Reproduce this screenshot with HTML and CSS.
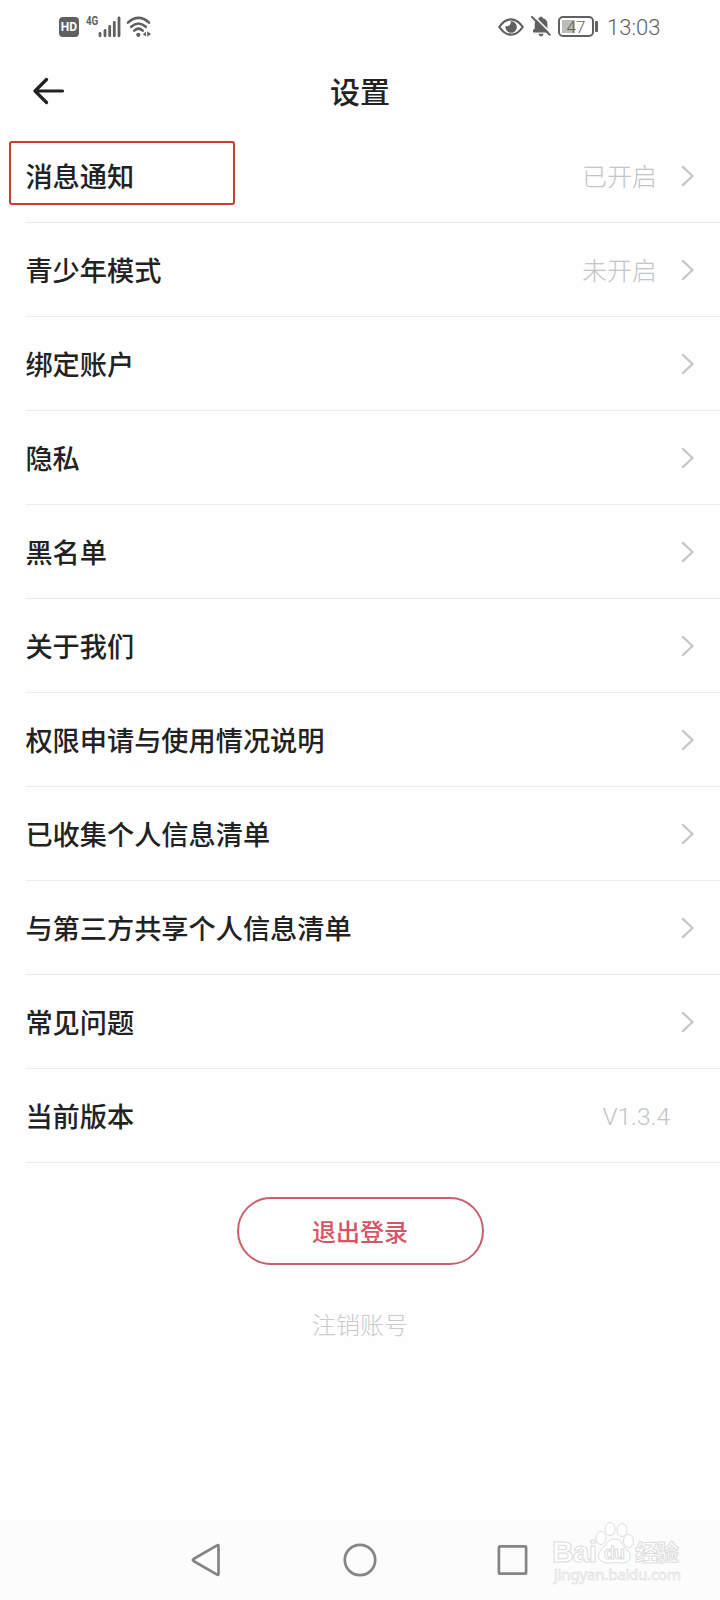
FILE: index.html
```html
<!DOCTYPE html>
<html lang="zh-CN">
<head>
  <meta charset="UTF-8">
  <meta name="viewport" content="width=device-width, initial-scale=1.0">
  <title>设置</title>
  <link rel="stylesheet" href="styles.css">
</head>
<body>
  <svg class="symbols" aria-hidden="true">
    <symbol id="chevron" viewBox="0 0 14 22">
      <path d="M2 2L11.5 11L2 20" fill="none" stroke="currentColor" stroke-width="2.4" stroke-linejoin="round" stroke-linecap="round"/>
    </symbol>
  </svg>

  <div class="status-bar">
    <div class="status-left">
      <span class="hd">HD</span>
      <span class="network">4G</span>
      <svg class="signal" width="23" height="22" viewBox="0 0 23 22">
        <path d="M2 17.5V19.8M7 14.5V19.8M11.7 10.5V19.8M16.3 6.3V19.8M21 2V19.8" fill="none" stroke="#606060" stroke-width="2.8" stroke-linecap="round"/>
      </svg>
      <svg class="wifi" width="26" height="22" viewBox="0 0 26 22">
        <g fill="none" stroke="#606060" stroke-width="2.6" stroke-linecap="round">
          <path d="M2 6.6Q12.5 -2.8 23 6.6"/>
          <path d="M5.2 10.8Q12.5 4.2 19.8 10.8"/>
          <path d="M8.3 14.6Q12.5 10.8 16.7 14.6"/>
        </g>
        <circle cx="12.3" cy="18.8" r="2.1" fill="#606060"/>
        <path d="M20 15.8V20.6L16.8 18.2ZM21.2 15.2L25 18L21.2 20.8Z" fill="#606060"/>
      </svg>
    </div>
    <div class="status-right">
      <svg class="eye" width="26" height="18" viewBox="0 0 26 18">
        <path d="M1.3 9Q6.5 1.3 13 1.3T24.7 9Q19.5 16.7 13 16.7T1.3 9Z" fill="none" stroke="#606060" stroke-width="2.2"/>
        <path d="M12.5 3.4A3.7 3.7 0 0 1 7.6 8A5.7 5.7 0 1 0 12.5 3.4Z" fill="#606060"/>
      </svg>
      <svg class="bell" width="20" height="21" viewBox="0 0 20 21">
        <path d="M2 15.5V14L3.7 12.7V8Q3.7 3.2 8.1 2.3Q8.4 .4 10 .4T11.9 2.3Q16.4 3.2 16.4 8V12.7L18 14.5V16.5H2Z" fill="#606060"/>
        <path d="M7.5 17.8H12.7Q12 20.4 10 20.4T7.5 17.8Z" fill="#606060"/>
        <path d="M2.5 -.3L20 17.2" stroke="#fefefe" stroke-width="1.6"/>
        <path d="M1 1L18.7 18.7" stroke="#606060" stroke-width="2" stroke-linecap="round"/>
      </svg>
      <span class="battery"><span class="battery-level">47</span></span>
      <span class="clock">13:03</span>
    </div>
  </div>

  <header class="title-bar">
    <svg class="back" width="32" height="28" viewBox="0 0 32 28">
      <path d="M29.5 14H2.5M13.5 2.5L2 14L13.5 25.5" fill="none" stroke="#222" stroke-width="3.2" stroke-linecap="round" stroke-linejoin="round"/>
    </svg>
    <h1>设置</h1>
  </header>

  <main>
    <ul class="settings">
      <li class="marked"><span>消息通知</span><span class="value">已开启</span><svg class="chevron"><use href="#chevron"/></svg></li>
      <li><span>青少年模式</span><span class="value">未开启</span><svg class="chevron"><use href="#chevron"/></svg></li>
      <li><span>绑定账户</span><svg class="chevron"><use href="#chevron"/></svg></li>
      <li><span>隐私</span><svg class="chevron"><use href="#chevron"/></svg></li>
      <li><span>黑名单</span><svg class="chevron"><use href="#chevron"/></svg></li>
      <li><span>关于我们</span><svg class="chevron"><use href="#chevron"/></svg></li>
      <li><span>权限申请与使用情况说明</span><svg class="chevron"><use href="#chevron"/></svg></li>
      <li><span>已收集个人信息清单</span><svg class="chevron"><use href="#chevron"/></svg></li>
      <li><span>与第三方共享个人信息清单</span><svg class="chevron"><use href="#chevron"/></svg></li>
      <li><span>常见问题</span><svg class="chevron"><use href="#chevron"/></svg></li>
      <li><span>当前版本</span><span class="value version">V1.3.4</span></li>
    </ul>
    <button class="logout">退出登录</button>
    <a class="close-account">注销账号</a>
  </main>

  <nav class="nav-bar">
    <svg width="34" height="36" viewBox="0 0 34 36">
      <path d="M28.5 4V32Q28.5 33.5 27.1 32.7L3.5 19Q2.1 18 3.5 17L27.1 3.3Q28.5 2.5 28.5 4Z" fill="none" stroke="#858585" stroke-width="2.7" stroke-linejoin="round"/>
    </svg>
    <svg width="34" height="36" viewBox="0 0 34 36">
      <circle cx="17" cy="18" r="15.2" fill="none" stroke="#858585" stroke-width="2.7"/>
    </svg>
    <svg width="34" height="36" viewBox="0 0 34 36">
      <rect x="2.9" y="4.4" width="27.2" height="27.2" rx="1.2" fill="none" stroke="#858585" stroke-width="2.7"/>
    </svg>
  </nav>

  <svg class="watermark" width="140" height="70" viewBox="0 0 140 70">
    <g fill="#fff" stroke="#dcdcdc" stroke-width="1">
      <text x="1" y="42" class="wm-bai" textLength="45">Bai</text>
      <ellipse cx="50" cy="18" rx="5" ry="6.5"/>
      <ellipse cx="59" cy="9" rx="5" ry="6.5"/>
      <ellipse cx="71" cy="10" rx="5" ry="6.5"/>
      <ellipse cx="77.5" cy="21" rx="5" ry="6.5"/>
      <path d="M63 19C56 19 56 25 50 30C45 35 48 43 56 43C61 43 64 42 71 43C79 44 82 35 76 30C71 26 71 19 63 19Z"/>
      <text x="53" y="39" class="wm-du" textLength="21">du</text>
      <text x="84" y="41" class="wm-cn" textLength="44">经验</text>
    </g>
    <text x="3" y="59.5" class="wm-url" textLength="127">jingyan.baidu.com</text>
  </svg>
</body>
</html>
```
FILE: styles.css
```css
* {
  box-sizing: border-box;
}
body {
  margin: 0;
  width: 720px;
  height: 1600px;
  display: flex;
  flex-direction: column;
  position: relative;
  overflow: hidden;
  background: #fefefe;
  color: #222;
  font-family: "Noto Sans CJK SC", sans-serif;
}
.symbols {
  position: absolute;
  width: 0;
  height: 0;
}
.status-bar {
  height: 52px;
  padding: 1px 59px 0;
  display: flex;
  justify-content: space-between;
  align-items: center;
  color: #606060;
}
.status-left,
.status-right {
  display: flex;
  align-items: center;
}
.hd {
  width: 20px;
  height: 20px;
  border-radius: 4px;
  background: #606060;
  color: #fff;
  font: bold 12px/21px Roboto, sans-serif;
  text-align: center;
}
.network {
  margin: 0 0 11px 7px;
  width: 12px;
  font: bold 13px/12px Roboto, sans-serif;
  transform: scaleX(.75);
  transform-origin: left;
}
.wifi {
  margin-left: 5px;
}
.bell {
  margin-left: 7px;
}
.battery {
  position: relative;
  width: 36px;
  height: 21px;
  margin: 0 0 0 7px;
  padding: 2px;
  border: 2px solid #606060;
  border-radius: 5px;
}
.battery::after {
  content: "";
  position: absolute;
  right: -6px;
  top: 3px;
  width: 3px;
  height: 11px;
  border-radius: 1px;
  background: #606060;
}
.battery-level {
  display: block;
  width: 28px;
  height: 13px;
  background: linear-gradient(to right, #bbb 13px, transparent 13px);
  font: 300 17px/14px Roboto, sans-serif;
  text-align: center;
}
.clock {
  margin: 2px 0 0 13px;
  width: 54px;
  font: 300 22px/26px Roboto, sans-serif;
  white-space: nowrap;
}
.title-bar {
  height: 77px;
  padding: 0 33px;
  display: grid;
  grid-template-columns: 32px 1fr 32px;
  align-items: center;
}
.title-bar h1 {
  margin: 0 0 1px;
  font-size: 30px;
  line-height: 40px;
  font-weight: 500;
  text-align: center;
}
main {
  flex: 1;
  display: flex;
  flex-direction: column;
  align-items: center;
}
.settings {
  align-self: stretch;
  margin: 0 0 0 26px;
  padding: 0;
  list-style: none;
}
.settings li {
  position: relative;
  height: 94px;
  padding: 0 25px 2px 0;
  display: flex;
  align-items: center;
  border-bottom: 1px solid #ececec;
  font-size: 27.2px;
  font-weight: 500;
}
.settings li > span:first-child {
  margin-left: -.6px;
}
/* red frame over the first entry */
.marked::before {
  content: "";
  position: absolute;
  left: -17px;
  top: 12px;
  width: 222px;
  height: 60px;
  border: 2px solid #cc3b33;
  border-radius: 3px;
}
.value {
  margin-left: auto;
  color: #c2c4c8;
  font-size: 25px;
  font-weight: 300;
}
.version {
  margin: 3px 25px 0 auto;
  font-family: Roboto, sans-serif;
  font-size: 24.5px;
}
.chevron {
  width: 14px;
  height: 22px;
  margin: 2px 0 0 auto;
  color: #c6c6c8;
}
.value + .chevron {
  margin-left: 24px;
}
.logout {
  width: 247px;
  height: 68px;
  margin-top: 34px;
  padding: 0;
  border: 2px solid #c9616c;
  border-radius: 34px;
  background: none;
  color: #d45563;
  font: 500 24px/32px "Noto Sans CJK SC", sans-serif;
}
.close-account {
  margin-top: 41px;
  color: #c9cacc;
  font-size: 24px;
  line-height: 36px;
  font-weight: 300;
}
.nav-bar {
  height: 80px;
  padding: 0 190px;
  display: flex;
  justify-content: space-between;
  align-items: center;
  background: #fcfcfc;
}
.watermark {
  position: absolute;
  left: 551px;
  top: 1520px;
}
.wm-bai {
  font: bold 30px "Liberation Sans", sans-serif;
}
.wm-du {
  font: bold 18px "Liberation Sans", sans-serif;
}
.wm-cn {
  font: bold 23px "Noto Sans CJK SC", sans-serif;
}
.wm-url {
  font: 15px "Noto Sans", sans-serif;
  fill: #fff;
  stroke: #e4e4e4;
  stroke-width: .8px;
}
```
